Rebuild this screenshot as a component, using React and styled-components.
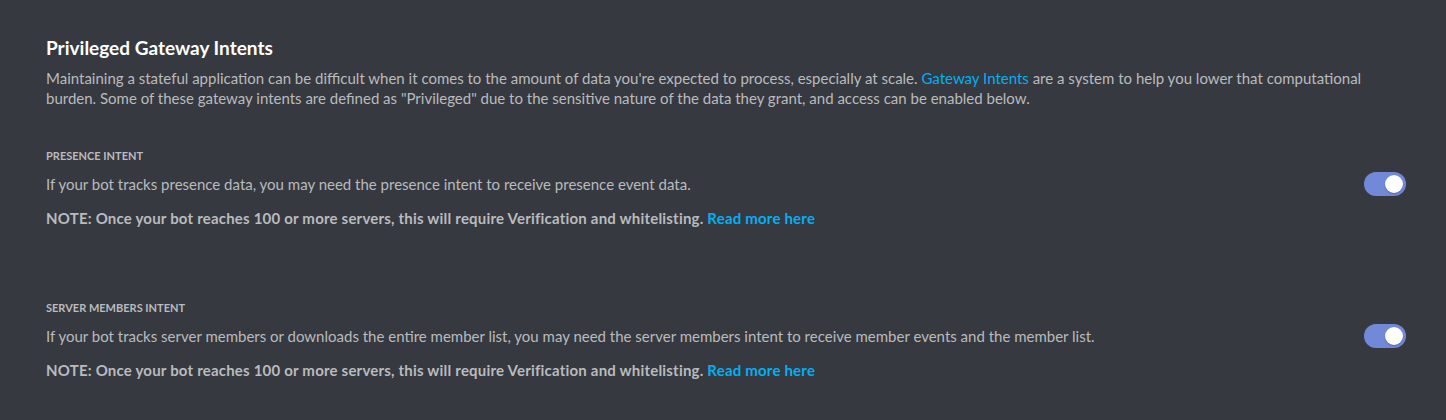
import styled, { createGlobalStyle } from "styled-components";

const GlobalStyle = createGlobalStyle`
  html, body {
    margin: 0;
    background: #36393f;
  }
  body {
    font-family: Lato, "Noto Sans", "Liberation Sans", sans-serif;
    -webkit-font-smoothing: antialiased;
  }
`;

const Page = styled.div`
  min-height: 420px;
  box-sizing: border-box;
  padding: 36px 40px 0 46px;
  background: #36393f;
`;

const Title = styled.h2`
  margin: 0;
  font-size: 19px;
  line-height: 24px;
  font-weight: 700;
  color: #ffffff;
`;

const Description = styled.p`
  margin: 8px 0 0;
  font-size: 15px;
  line-height: 20px;
  color: #b9bbbe;
`;

const Link = styled.a`
  color: #00b0f4;
  text-decoration: none;
  cursor: pointer;
`;

const Intents = styled.div`
  display: flex;
  flex-direction: column;
  gap: 72px;
  margin-top: 40px;
`;

const Intent = styled.section`
  display: flex;
  flex-direction: column;
`;

const Label = styled.h5`
  margin: 0;
  font-size: 11px;
  line-height: 16px;
  font-weight: 700;
  text-transform: uppercase;
  color: #b9bbbe;
`;

const Row = styled.div`
  display: flex;
  align-items: center;
  justify-content: space-between;
  margin-top: 8px;
  height: 24px;
`;

const Text = styled.div`
  font-size: 15px;
  line-height: 20px;
  color: #b9bbbe;
`;

const Note = styled.div`
  margin-top: 12px;
  font-size: 15px;
  letter-spacing: 0.2px;
  line-height: 20px;
  font-weight: 700;
  color: #b9bbbe;
`;

const Switch = styled.div`
  position: relative;
  width: 42px;
  height: 24px;
  border-radius: 12px;
  background: ${({ $on }) => ($on ? "#7289da" : "#72767d")};
  flex-shrink: 0;
  cursor: pointer;
`;

const Knob = styled.span`
  position: absolute;
  top: 3px;
  left: ${({ $on }) => ($on ? "21px" : "3px")};
  width: 18px;
  height: 18px;
  border-radius: 50%;
  background: #ffffff;
  box-shadow: 0 1px 2px rgba(0, 0, 0, 0.25);
`;

const intents = [
  {
    label: "Presence Intent",
    text: "If your bot tracks presence data, you may need the presence intent to receive presence event data.",
  },
  {
    label: "Server Members Intent",
    text: "If your bot tracks server members or downloads the entire member list, you may need the server members intent to receive member events and the member list.",
  },
];

export default function App() {
  return (
    <>
      <GlobalStyle />
      <Page>
        <Title>Privileged Gateway Intents</Title>
        <Description>
          Maintaining a stateful application can be difficult when it comes to the amount of data you're expected to
          process, especially at scale. <Link>Gateway Intents</Link> are a system to help you lower that computational
          burden. Some of these gateway intents are defined as "Privileged" due to the sensitive nature of the data they
          grant, and access can be enabled below.
        </Description>
        <Intents>
          {intents.map((intent) => (
            <Intent key={intent.label}>
              <Label>{intent.label}</Label>
              <Row>
                <Text>{intent.text}</Text>
                <Switch $on>
                  <Knob $on />
                </Switch>
              </Row>
              <Note>
                NOTE: Once your bot reaches 100 or more servers, this will require Verification and whitelisting.{" "}
                <Link>Read more here</Link>
              </Note>
            </Intent>
          ))}
        </Intents>
      </Page>
    </>
  );
}
